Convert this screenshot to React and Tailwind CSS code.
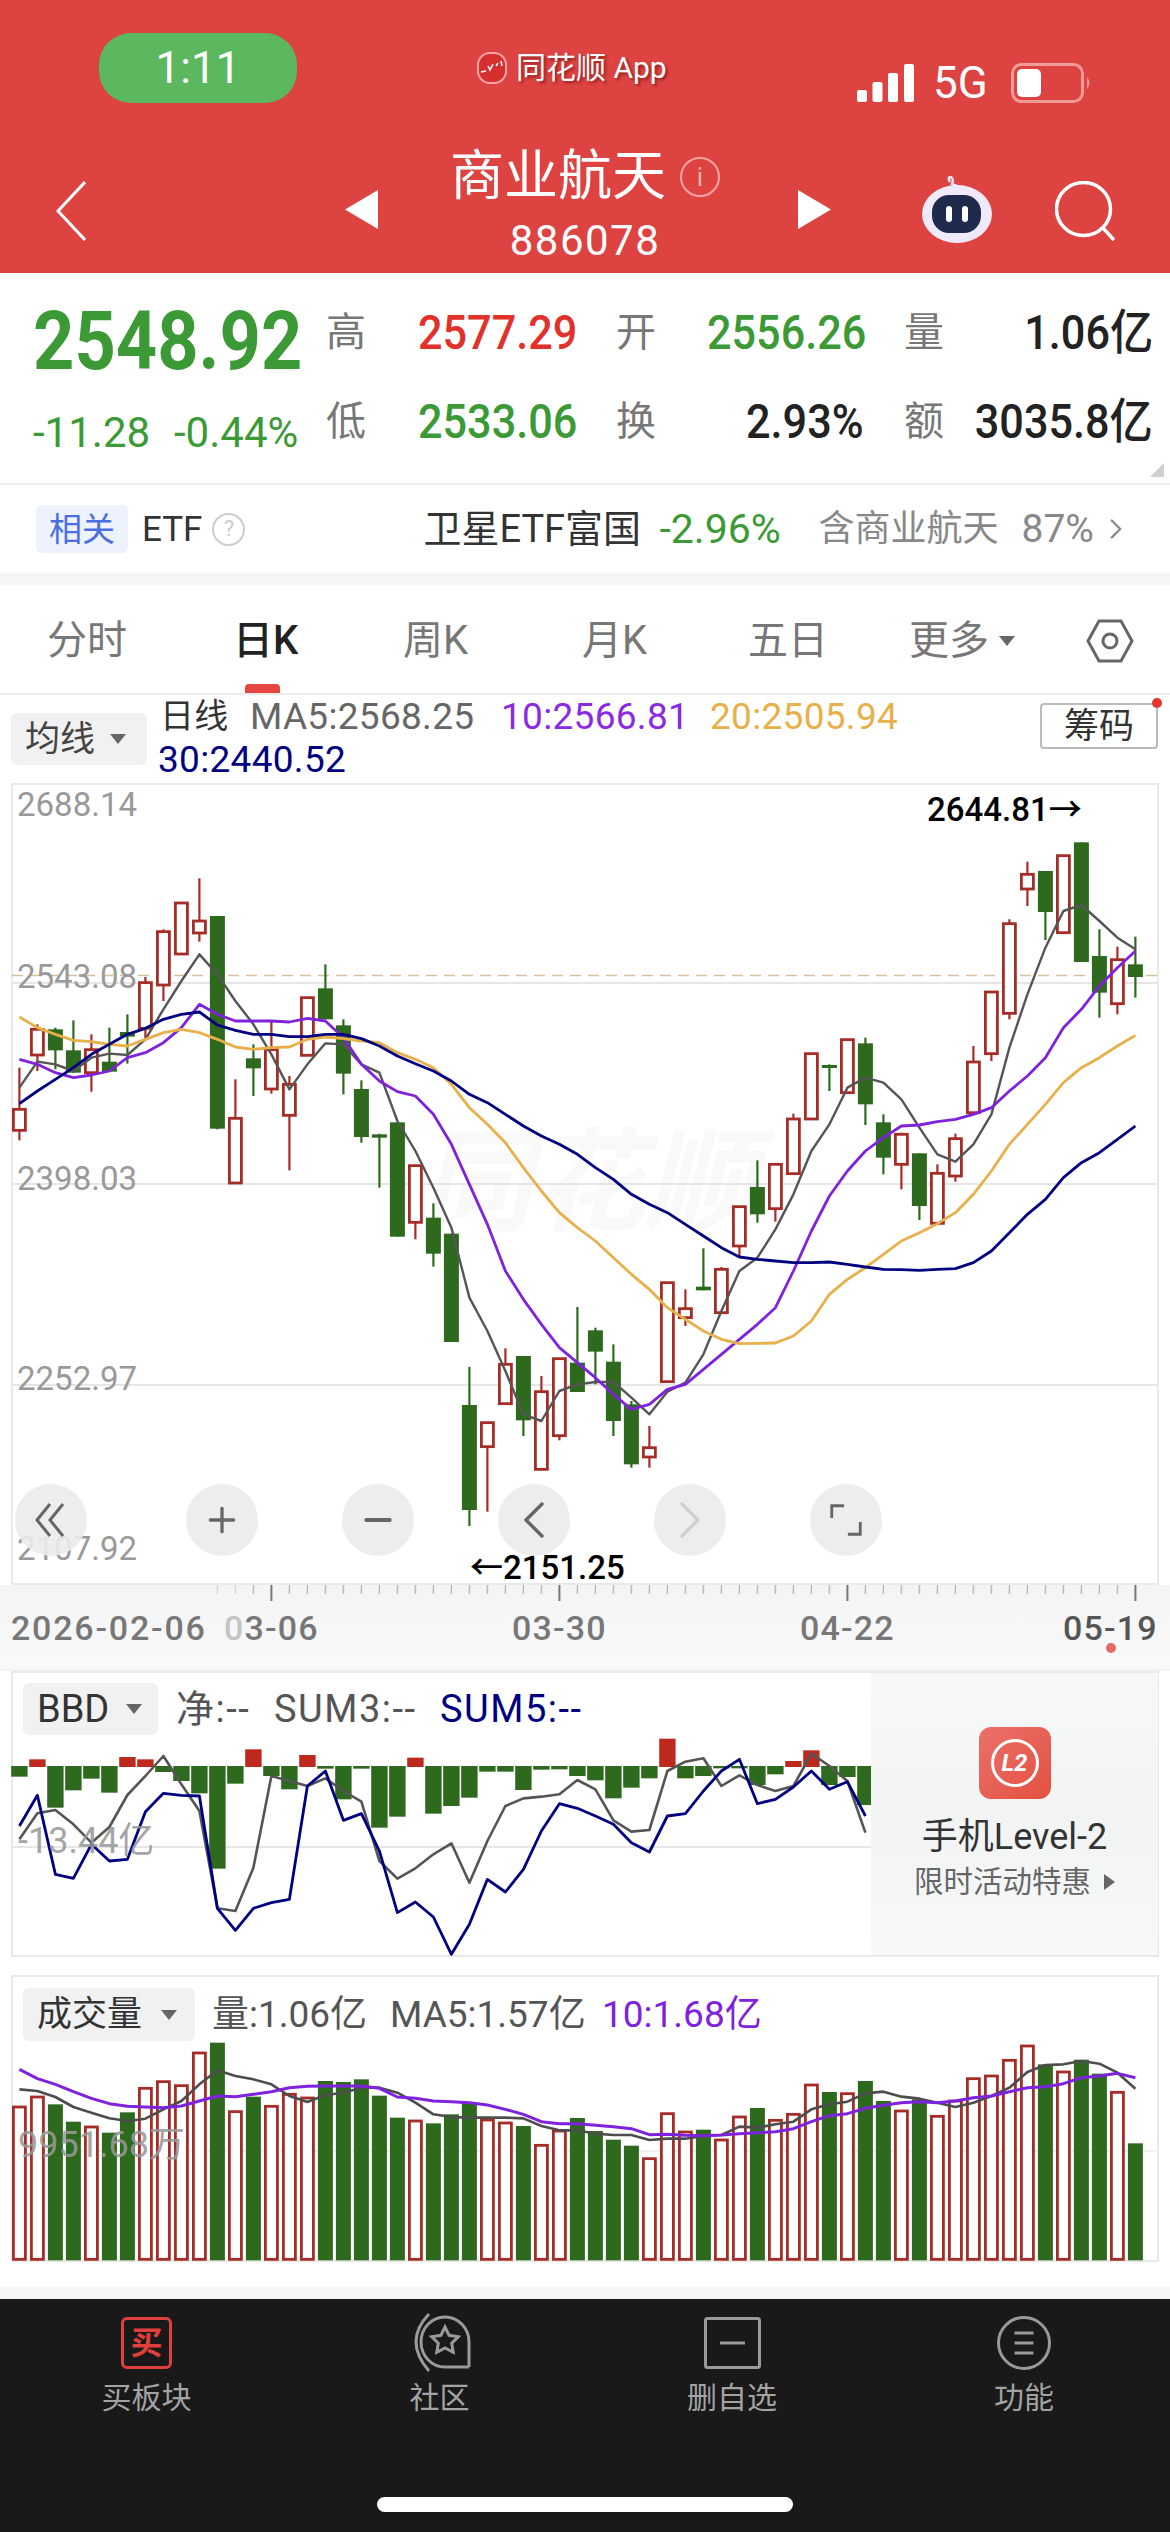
import { ChevronLeft, ChevronRight, Minus, Plus } from "lucide-react";

// candle rows: type, high, top, bottom, low (y values read off a 3x crop of the chart)
const CANDLES = [
  ["r", 890, 1015, 1078, 1108], ["r", 760, 775, 852, 900], ["g", 770, 775, 838, 895], ["g", 748, 838, 905, 905],
  ["r", 790, 836, 905, 962], ["g", 770, 872, 902, 902], ["g", 730, 783, 797, 878], ["r", 618, 635, 772, 810],
  ["r", 475, 482, 642, 690], ["r", 396, 396, 549, 549], ["r", 322, 450, 486, 512], ["g", 435, 435, 1073, 1075],
  ["r", 925, 1042, 1236, 1236], ["g", 820, 862, 892, 975], ["r", 750, 836, 954, 968], ["r", 915, 940, 1033, 1198],
  ["r", 680, 680, 853, 853], ["g", 580, 652, 745, 745], ["g", 745, 763, 908, 970], ["g", 928, 954, 1098, 1115],
  ["g", 1088, 1090, 1100, 1250], ["g", 1054, 1054, 1397, 1397], ["r", 1184, 1184, 1354, 1405], ["g", 1297, 1340, 1448, 1487],
  ["g", 1388, 1388, 1713, 1713], ["g", 1788, 1902, 2217, 2265], ["r", 1955, 1955, 2027, 2222], ["r", 1732, 1780, 1898, 1898],
  ["g", 1755, 1755, 1948, 1995], ["r", 1815, 1862, 2095, 2095], ["r", 1763, 1763, 1994, 2008], ["g", 1608, 1775, 1863, 1863],
  ["g", 1670, 1678, 1742, 1840], ["g", 1720, 1772, 1950, 1995], ["g", 1890, 1900, 2080, 2090], ["r", 1965, 2030, 2058, 2090],
  ["r", 1535, 1535, 1832, 1832], ["r", 1555, 1613, 1640, 1665], ["g", 1432, 1547, 1558, 1558], ["r", 1488, 1495, 1625, 1625],
  ["r", 1307, 1307, 1425, 1460], ["g", 1168, 1248, 1330, 1355], ["r", 1176, 1180, 1313, 1352], ["r", 1028, 1044, 1208, 1210],
  ["r", 845, 848, 1044, 1044], ["g", 880, 882, 890, 960], ["r", 806, 806, 965, 965], ["g", 800, 817, 1000, 1062],
  ["g", 1030, 1054, 1160, 1210], ["r", 1085, 1090, 1180, 1255], ["g", 1147, 1147, 1305, 1347], ["r", 1180, 1207, 1357, 1357],
  ["r", 1088, 1103, 1215, 1232], ["r", 825, 873, 1025, 1025], ["r", 663, 663, 848, 870], ["r", 445, 458, 727, 745],
  ["r", 272, 310, 354, 405], ["g", 300, 300, 423, 507], ["r", 254, 254, 485, 485], ["g", 214, 214, 573, 573],
  ["g", 475, 555, 665, 740], ["r", 527, 566, 698, 730], ["g", 497, 580, 618, 680],
];

const MA5 = [950, 872, 880, 900, 860, 848, 852, 805, 715, 630, 550, 610, 690, 760, 850, 955, 880, 817, 820, 880, 905, 1050, 1140, 1250, 1370, 1580, 1680, 1800, 1930, 1950, 1860, 1840, 1833, 1833, 1880, 1930, 1862, 1835, 1750, 1620, 1500, 1460, 1375, 1270, 1140, 1060, 950, 920, 935, 985, 1070, 1150, 1172, 1120, 1030, 830, 670, 530, 420, 402, 450, 500, 535];
const MA10 = [865, 880, 905, 920, 912, 900, 860, 845, 815, 770, 700, 730, 750, 750, 750, 753, 742, 750, 800, 880, 930, 962, 975, 1030, 1120, 1240, 1360, 1500, 1585, 1660, 1730, 1775, 1820, 1870, 1915, 1900, 1855, 1840, 1795, 1750, 1705, 1660, 1610, 1500, 1380, 1275, 1200, 1140, 1100, 1065, 1062, 1052, 1045, 1030, 1010, 960, 915, 860, 770, 715, 645, 590, 540];
const MA20 = [738, 770, 790, 808, 812, 820, 825, 805, 785, 775, 785, 805, 828, 835, 830, 828, 805, 798, 803, 810, 815, 845, 865, 890, 940, 1010, 1060, 1115, 1190, 1260, 1325, 1370, 1410, 1460, 1510, 1555, 1610, 1645, 1680, 1705, 1718, 1717, 1716, 1695, 1650, 1570, 1525, 1490, 1450, 1410, 1385, 1358, 1325, 1270, 1200, 1120, 1060, 1000, 935, 890, 860, 825, 793];
const MA30 = [998, 960, 925, 890, 850, 820, 790, 772, 745, 730, 723, 762, 778, 790, 790, 797, 797, 790, 790, 803, 825, 855, 878, 900, 930, 970, 995, 1030, 1065, 1095, 1120, 1150, 1190, 1225, 1270, 1300, 1325, 1360, 1395, 1430, 1458, 1465, 1470, 1475, 1475, 1473, 1480, 1488, 1495, 1496, 1498, 1495, 1493, 1475, 1440, 1385, 1330, 1285, 1220, 1175, 1145, 1105, 1065];

const BBD_BARS = [
  ["g", 347], ["r", 295], ["g", 440], ["g", 388], ["g", 353], ["g", 395], ["r", 288], ["r", 295], ["g", 333], ["g", 360], ["g", 397], ["g", 623],
  ["g", 368], ["r", 265], ["g", 345], ["g", 385], ["r", 282], ["g", 323], ["g", 415], ["g", 323], ["g", 500], ["g", 467], ["r", 290], ["g", 458],
  ["g", 435], ["g", 410], ["g", 332], ["g", 332], ["g", 387], ["g", 326], ["g", 325], ["g", 345], ["g", 358], ["g", 412], ["g", 380], ["g", 352],
  ["r", 233], ["g", 352], ["g", 345], ["g", 322], ["g", 322], ["g", 372], ["g", 340], ["r", 300], ["r", 268], ["g", 372], ["g", 348], ["g", 432],
];
const SUM3 = [535, 457, 447, 490, 545, 498, 402, 345, 285, 370, 450, 742, 750, 620, 345, 360, 375, 352, 390, 422, 600, 653, 622, 580, 547, 665, 540, 435, 412, 407, 400, 357, 385, 478, 512, 507, 330, 302, 292, 375, 343, 372, 390, 375, 278, 315, 360, 515];
const SUM5 = [495, 403, 640, 652, 550, 600, 595, 452, 397, 403, 405, 742, 808, 742, 725, 715, 375, 330, 478, 458, 570, 755, 723, 768, 880, 790, 655, 693, 625, 510, 428, 442, 465, 490, 545, 573, 465, 458, 390, 330, 295, 428, 415, 378, 330, 385, 362, 465];

const VOL_BARS = [
  ["r", 408], ["r", 378], ["g", 400], ["g", 452], ["r", 468], ["g", 485], ["g", 424], ["r", 352], ["r", 332], ["r", 344], ["r", 246], ["g", 215],
  ["r", 422], ["g", 377], ["r", 406], ["r", 370], ["r", 381], ["g", 330], ["g", 333], ["g", 325], ["g", 374], ["g", 440], ["r", 450], ["g", 457],
  ["g", 430], ["g", 395], ["r", 447], ["r", 456], ["g", 465], ["r", 523], ["r", 480], ["g", 441], ["g", 480], ["g", 506], ["g", 524], ["r", 563],
  ["r", 428], ["r", 483], ["g", 476], ["r", 507], ["r", 438], ["g", 411], ["r", 448], ["r", 430], ["r", 342], ["g", 363], ["r", 368], ["g", 330],
  ["g", 390], ["r", 420], ["g", 385], ["r", 436], ["r", 390], ["r", 323], ["r", 315], ["r", 268], ["r", 225], ["g", 280], ["r", 303], ["g", 266],
  ["g", 308], ["r", 364], ["g", 517],
];
const VOL5 = [355, 360, 378, 408, 425, 442, 450, 443, 415, 390, 340, 298, 315, 325, 340, 375, 393, 372, 365, 350, 350, 365, 395, 430, 438, 440, 440, 440, 442, 465, 478, 478, 488, 492, 492, 507, 503, 503, 495, 492, 467, 470, 460, 452, 415, 400, 392, 367, 362, 377, 383, 395, 408, 395, 375, 350, 303, 282, 280, 270, 278, 305, 353];
const VOL10 = [295, 323, 340, 362, 382, 398, 406, 408, 410, 405, 390, 375, 377, 370, 362, 350, 346, 345, 345, 345, 352, 378, 382, 390, 392, 395, 402, 415, 430, 452, 458, 458, 463, 467, 473, 491, 490, 493, 494, 492, 488, 485, 482, 473, 452, 434, 428, 412, 403, 395, 392, 395, 390, 380, 375, 362, 350, 347, 338, 320, 315, 307, 320];

const RED = "#a62d27";
const GREEN = "#2d6a1e";
const GREY_LINE = "#555555";
const PURPLE = "#7f22dd";
const ORANGE = "#e8b04b";
const NAVY = "#000080";

const xAt = (i) => 19.4 + 18 * i;
const linePoints = (values, toY) => values.map((v, i) => `${xAt(i)},${toY(v)}`).join(" ");

function Line({ values, toY, color, width = 2.8 }) {
  return <polyline points={linePoints(values, toY)} fill="none" stroke={color} strokeWidth={width} strokeLinejoin="round" />;
}

function Frame({ h }) {
  return <rect x="12" y="1" width="1146" height={h} fill="none" stroke="#e9e9e9" strokeWidth="2" />;
}

function Caret({ className = "" }) {
  return (
    <svg viewBox="0 0 18 12" className={className}>
      <path d="M1 1 H17 L9 11 Z" fill="#666" />
    </svg>
  );
}

function KChart() {
  const toY = (v) => v / 3 - 12;
  return (
    <div className="relative h-[802px]">
      <div className="absolute left-[420px] top-[345px] text-[112px] leading-none font-bold italic whitespace-nowrap text-[#f9f9f9]">同花顺</div>
      <svg className="relative block h-full w-full" viewBox="0 0 1170 802">
        <Frame h={800} />
        {[200, 401, 602].map((y) => (
          <line key={y} x1="12" x2="1158" y1={y} y2={y} stroke="#e6e6e6" strokeWidth="2" />
        ))}
        <line x1="12" x2="1158" y1="192.5" y2="192.5" stroke="#d9bf9b" strokeWidth="1.6" strokeDasharray="11 7" />
        {CANDLES.map(([type, high, top, bottom, low], i) => {
          const x = xAt(i);
          const color = type === "r" ? RED : GREEN;
          return (
            <g key={i}>
              <line x1={x} x2={x} y1={toY(high)} y2={toY(low)} stroke={color} strokeWidth="2.2" />
              {type === "r" ? (
                <rect x={x - 6} y={toY(top)} width="12" height={toY(bottom) - toY(top)} fill="#fff" stroke={color} strokeWidth="2.8" />
              ) : (
                <rect x={x - 7.5} y={toY(top)} width="15" height={Math.max(toY(bottom) - toY(top), 3)} fill={color} />
              )}
            </g>
          );
        })}
        <Line values={MA5} toY={toY} color={GREY_LINE} width={2.4} />
        <Line values={MA10} toY={toY} color={PURPLE} />
        <Line values={MA20} toY={toY} color={ORANGE} />
        <Line values={MA30} toY={toY} color={NAVY} />
      </svg>

      <span className="absolute left-[17px] top-[6px] text-[33px] leading-[32px] text-[#999]">2688.14</span>
      <span className="absolute left-[17px] top-[178px] text-[33px] leading-[32px] text-[#999]">2543.08</span>
      <span className="absolute left-[17px] top-[380px] text-[33px] leading-[32px] text-[#999]">2398.03</span>
      <span className="absolute left-[17px] top-[580px] text-[33px] leading-[32px] text-[#999]">2252.97</span>
      <span className="absolute left-[17px] top-[750px] text-[33px] leading-[32px] text-[#999]">2107.92</span>
      <span className="absolute left-[927px] top-[11px] text-[33px] leading-[32px] font-medium whitespace-nowrap text-black">2644.81→</span>
      <span className="absolute left-[470px] top-[769px] text-[33px] leading-[32px] font-medium whitespace-nowrap text-black">←2151.25</span>

      {/* floating zoom / pan buttons */}
      <div className="absolute left-[15px] top-[701px] flex gap-[84px]">
        <RoundBtn>
          <svg viewBox="0 0 40 40" className="h-[40px] w-[40px]" fill="none" stroke="#666" strokeWidth="3">
            <path d="M19 4 L6 20 L19 36 M32 4 L19 20 L32 36" />
          </svg>
        </RoundBtn>
        <div className="ml-[15px]">
          <RoundBtn><Plus size={40} strokeWidth={2} color="#666" /></RoundBtn>
        </div>
        <RoundBtn><Minus size={40} strokeWidth={2.4} color="#666" /></RoundBtn>
        <RoundBtn><ChevronLeft size={64} strokeWidth={1.3} color="#666" /></RoundBtn>
        <RoundBtn><ChevronRight size={64} strokeWidth={1.3} color="#cfcfcf" /></RoundBtn>
        <RoundBtn>
          <svg viewBox="0 0 40 40" className="h-[38px] w-[38px]" fill="none" stroke="#666" strokeWidth="3">
            <path d="M18 5 H5 V18 M35 22 V35 H22" />
          </svg>
        </RoundBtn>
      </div>
    </div>
  );
}

function RoundBtn({ children }) {
  return <div className="flex h-[72px] w-[72px] items-center justify-center rounded-full bg-[#ebebeb]/90">{children}</div>;
}

function TimeAxis() {
  const ticks = Array.from({ length: 52 }, (_, n) => n + 11);
  return (
    <div className="relative h-[84px] bg-gradient-to-b from-[#f4f4f4] to-[#f9f9f9]">
      <svg className="block h-[20px] w-full" viewBox="0 0 1170 20">
        {ticks.map((i) => {
          const major = (i - 14) % 16 === 0;
          return (
            <line
              key={i}
              x1={xAt(i)}
              x2={xAt(i)}
              y1="0"
              y2={major ? 16 : 9}
              stroke={major ? "#777" : "#bbb"}
              strokeWidth={major ? 2 : 1.5}
              opacity={i < 13 ? 0.5 : 1}
            />
          );
        })}
      </svg>
      <span className="absolute left-[11px] top-[26px] text-[34px] leading-[34px] font-medium tracking-[1.8px] text-[#777]">2026-02-06</span>
      <span className="absolute left-[224px] top-[26px] text-[34px] leading-[34px] font-medium tracking-[1.2px] text-[#777]"><span className="text-[#c4c4c4]">0</span>3-06</span>
      <span className="absolute left-[512px] top-[26px] text-[34px] leading-[34px] font-medium tracking-[1.2px] text-[#777]">03-30</span>
      <span className="absolute left-[800px] top-[26px] text-[34px] leading-[34px] font-medium tracking-[1.2px] text-[#777]">04-22</span>
      <span className="absolute left-[1063px] top-[26px] text-[34px] leading-[34px] font-medium tracking-[1.2px] text-[#555]">05-19</span>
      <span className="absolute left-[1106px] top-[58px] h-[10px] w-[10px] rounded-full bg-[#e46a66]" />
    </div>
  );
}

function BbdPanel() {
  const toY = (v) => v / 3 - 10;
  return (
    <div className="relative h-[286px]">
      <svg className="block h-full w-full" viewBox="0 0 1170 286">
        <Frame h={284} />
        <line x1="12" x2="1158" y1="176" y2="176" stroke="#e6e6e6" strokeWidth="2" />
        {BBD_BARS.map(([type, v], i) => {
          const base = toY(315);
          const y = toY(v);
          return type === "r" ? (
            <rect key={i} x={xAt(i) - 8.2} y={y} width="16.4" height={base - y + 1} fill="#bf281c" />
          ) : (
            <rect key={i} x={xAt(i) - 8.2} y={base} width="16.4" height={y - base} fill={GREEN} />
          );
        })}
        <Line values={SUM3} toY={toY} color={GREY_LINE} width={2.6} />
        <Line values={SUM5} toY={toY} color={NAVY} width={2.8} />
      </svg>

      <span className="absolute left-[18px] top-[152px] text-[36px] leading-[36px] whitespace-nowrap text-[#999]/90">-13.44亿</span>

      <div className="absolute left-[23px] top-[12px] flex items-center">
        <div className="flex h-[52px] w-[135px] items-center gap-[16px] rounded-[6px] bg-[#f1f1f1] pl-[14px] text-[38px] leading-none text-[#333]">
          BBD <Caret className="h-[12px] w-[18px]" />
        </div>
        <div className="ml-[18px] flex text-[38px] leading-none tracking-[1.5px] whitespace-nowrap text-[#555]">
          <span className="w-[98px]">净:--</span>
          <span className="w-[166px]">SUM3:--</span>
          <span className="text-[#000080]">SUM5:--</span>
        </div>
      </div>

      {/* level-2 promo sits on top of the right part of the chart */}
      <div className="absolute bottom-[2px] left-[871px] top-[2px] flex w-[287px] flex-col items-center bg-gradient-to-b from-[#f7f8f8] via-[#f2f3f3] to-[#f7f8f8] pt-[54px]">
        <div className="flex h-[72px] w-[72px] items-center justify-center rounded-[12px] bg-gradient-to-br from-[#e9706a] to-[#e4503f]">
          <div className="flex h-[48px] w-[48px] items-center justify-center rounded-full border-[3px] border-white text-[24px] leading-none font-bold italic text-white">
            L2
          </div>
        </div>
        <div className="mt-[20px] text-[36px] leading-[36px] whitespace-nowrap text-[#333]">手机Level-2</div>
        <div className="mt-[11px] flex items-center gap-[13px] text-[29.5px] leading-[32px] whitespace-nowrap text-[#666]">
          限时活动特惠
          <svg viewBox="0 0 11 16" className="h-[16px] w-[11px]">
            <path d="M0 0 L11 8 L0 16 Z" fill="#666" />
          </svg>
        </div>
      </div>
    </div>
  );
}

function VolumePanel() {
  const toY = (v) => v / 3 - 4;
  const base = toY(868);
  return (
    <div className="relative h-[312px]">
      <svg className="block h-full w-full" viewBox="0 0 1170 312">
        <rect x="12" y="1" width="1146" height="285" fill="none" stroke="#e9e9e9" strokeWidth="2" />
        <line x1="12" x2="1158" y1="176" y2="176" stroke="#eee" strokeWidth="1.5" />
        {VOL_BARS.map(([type, v], i) => {
          const y = toY(v);
          return type === "r" ? (
            <rect key={i} x={xAt(i) - 6} y={y} width="12" height={base - y - 1} fill="#fff" stroke={RED} strokeWidth="2.8" />
          ) : (
            <rect key={i} x={xAt(i) - 7.5} y={y} width="15" height={base - y} fill={GREEN} />
          );
        })}
        <Line values={VOL5} toY={toY} color="#4d4d4d" width={2.6} />
        <Line values={VOL10} toY={toY} color={PURPLE} width={3} />
      </svg>

      <span className="absolute left-[18px] top-[152px] text-[36px] leading-[36px] whitespace-nowrap text-[#999]/90">9951.68万</span>

      <div className="absolute left-[23px] top-[13px] flex items-center">
        <div className="flex h-[53px] w-[172px] items-center gap-[18px] rounded-[6px] bg-[#f1f1f1] pl-[14px] text-[35px] leading-none text-[#333]">
          成交量 <Caret className="h-[12px] w-[18px]" />
        </div>
        <div className="ml-[17px] flex text-[37px] leading-none whitespace-nowrap text-[#555]">
          <span className="w-[178px]">量:1.06亿</span>
          <span className="w-[212px]">MA5:1.57亿</span>
          <span className="text-[#7f22dd]">10:1.68亿</span>
        </div>
      </div>
    </div>
  );
}

function TabItem({ icon, label }) {
  return (
    <div className="flex flex-col items-center">
      <div className="flex h-[60px] items-center justify-center">{icon}</div>
      <div className="mt-[10px] text-[30px] leading-[30px] text-[#a3a3a3]">{label}</div>
    </div>
  );
}

function BuyIcon() {
  return (
    <div className="flex h-[52px] w-[51px] items-center justify-center rounded-[6px] border-[3px] border-[#e0403d] text-[32px] leading-none font-bold text-[#e0403d]">
      买
    </div>
  );
}

function CommunityIcon() {
  return (
    <svg viewBox="0 0 62 60" className="h-[60px] w-[62px]" fill="none" stroke="#9a9a9a" strokeWidth="3">
      <path d="M20 1 Q-6 28 20 58" />
      <path d="M60 54 V29 A24 25 0 1 0 36 54 H60" />
      <polygon points="36,14 40.1,22.3 49.3,23.7 42.7,30.2 44.2,39.3 36,35 27.8,39.3 29.3,30.2 22.7,23.7 31.9,22.3" />
    </svg>
  );
}

function WatchlistIcon() {
  return (
    <svg viewBox="0 0 57 52" className="h-[52px] w-[57px]" fill="none" stroke="#9a9a9a" strokeWidth="3">
      <rect x="1.5" y="1.5" width="54" height="49" rx="2" />
      <line x1="16" x2="41" y1="26" y2="26" />
    </svg>
  );
}

function MenuIcon() {
  return (
    <svg viewBox="0 0 54 54" className="h-[54px] w-[54px]" fill="none" stroke="#9a9a9a" strokeWidth="3">
      <circle cx="27" cy="27" r="25.5" />
      <path d="M17.5 17 H36.5 M17.5 27 H36.5 M17.5 37 H36.5" />
    </svg>
  );
}

function StatusBar() {
  return (
    <div className="flex h-[130px] items-start pl-[99px] pt-[33px] text-white">
      <div className="flex h-[70px] w-[198px] items-center justify-center rounded-[32px] bg-[#5cb85f] text-[44px] leading-none">1:11</div>
      <div className="ml-[180px] flex h-[70px] w-[380px] items-center gap-[9px]">
        <svg viewBox="0 0 30 32" className="h-[32px] w-[30px]">
          <rect x="1" y="1" width="28" height="30" rx="12" fill="#d5302f" stroke="#f1a6a4" strokeWidth="2" />
          <path d="M4 20 L9 19 M11 14 L13 18 L16 12 M19 14 L21 11 M24 9 L25 14" stroke="#fff" strokeWidth="1.5" fill="none" />
        </svg>
        <span className="text-[30px] leading-none whitespace-nowrap [text-shadow:2px_2px_3px_rgba(90,0,0,0.55)]">同花顺 App</span>
      </div>
      <div className="mt-[28px] flex items-center">
        <svg viewBox="0 0 57 38" className="h-[38px] w-[57px]" fill="#fff">
          <rect x="0" y="26" width="10" height="12" rx="2" />
          <rect x="15.5" y="18" width="10" height="20" rx="2" />
          <rect x="31" y="9" width="10" height="29" rx="2" />
          <rect x="47" y="0" width="10" height="38" rx="2" />
        </svg>
        <span className="ml-[19px] text-[44px] leading-none">5G</span>
        <svg viewBox="0 0 82 40" className="ml-[23px] h-[40px] w-[82px]">
          <rect x="1.5" y="1.5" width="70" height="37" rx="9" fill="none" stroke="#f29a98" strokeWidth="3" />
          <rect x="6" y="6" width="24" height="28" rx="5" fill="#fff" />
          <path d="M76 14 Q81 20 76 26 Z" fill="#f29a98" />
        </svg>
      </div>
    </div>
  );
}

function TitleBar() {
  return (
    <div className="flex h-[143px] items-start pl-[56px] text-white">
      <svg viewBox="0 0 30 60" className="mt-[51px] h-[60px] w-[30px]" fill="none" stroke="#fff" strokeWidth="3">
        <path d="M29 1 L2 30 L29 59" />
      </svg>
      <svg viewBox="0 0 33 39" className="ml-[259px] mt-[60px] h-[39px] w-[33px]">
        <path d="M33 0 V39 L0 19.5 Z" fill="#fff" />
      </svg>
      <div className="flex w-[420px] flex-col items-center pt-[20px]">
        <div className="flex items-center gap-[14px] pr-[6px]">
          <span className="text-[54px] leading-[54px]">商业航天</span>
          <span className="flex h-[40px] w-[40px] items-center justify-center rounded-full border-2 border-[#f5a5a3] text-[26px] leading-none text-[#f7b5b3]">i</span>
        </div>
        <div className="mt-[17px] pr-[6px] text-[42px] leading-[40px] tracking-[1.5px]">886078</div>
      </div>
      <svg viewBox="0 0 33 39" className="mt-[60px] h-[39px] w-[33px]">
        <path d="M0 0 V39 L33 19.5 Z" fill="#fff" />
      </svg>
      <svg viewBox="0 0 72 68" className="ml-[90px] mt-[46px] h-[68px] w-[72px]">
        <path d="M29 6 Q26 1 30 1 Q33 3 31 8 Q34 10 36 9" stroke="#e9e4f7" strokeWidth="2.5" fill="none" />
        <ellipse cx="36" cy="38" rx="35" ry="29" fill="#eeeaf9" />
        <rect x="11" y="19" width="49" height="38" rx="17" fill="#1f2a4d" />
        <rect x="25" y="30" width="6" height="16" rx="3" fill="#fff" />
        <rect x="41" y="30" width="6" height="16" rx="3" fill="#fff" />
      </svg>
      <svg viewBox="0 0 60 60" className="ml-[62px] mt-[51px] h-[60px] w-[60px]" fill="none" stroke="#fff" strokeWidth="3.5">
        <ellipse cx="28.5" cy="28" rx="27" ry="26.5" />
        <path d="M48 47 L59 59" />
      </svg>
    </div>
  );
}

function Quote() {
  const num = "inline-block whitespace-nowrap";
  return (
    <div className="relative flex h-[212px] border-b-2 border-[#ededed] bg-white">
      <div className="w-[326px] pl-[33px]">
        <div className={`${num} mt-[27px] origin-left scale-x-[0.88] text-[82px] leading-[82px] font-bold text-[#3c9a36]`}>2548.92</div>
        <div className="mt-[30px] flex gap-[24px] text-[42px] leading-[42px] text-[#3c9a36]">
          <span className={`${num} w-[117px]`}>-11.28</span>
          <span className={`${num} w-[128px]`}>-0.44%</span>
        </div>
      </div>
      <div className="grid flex-1 grid-cols-[92px_198px_91px_197px_40px_1fr] grid-rows-[89px_89px] items-center pt-[15px] pr-[17px] text-[40px] text-[#777]">
        <span>高</span>
        <span className={`${num} origin-left scale-x-[0.9] text-[48px] leading-none font-medium text-[#e1312b]`}>2577.29</span>
        <span>开</span>
        <span className={`${num} origin-left scale-x-[0.9] text-[48px] leading-none font-medium text-[#3c9a36]`}>2556.26</span>
        <span>量</span>
        <span className={`${num} origin-right scale-x-[0.9] justify-self-end text-[48px] leading-none font-medium text-[#222]`}>1.06亿</span>
        <span>低</span>
        <span className={`${num} origin-left scale-x-[0.9] text-[48px] leading-none font-medium text-[#3c9a36]`}>2533.06</span>
        <span>换</span>
        <span className={`${num} mr-[40px] origin-right scale-x-[0.9] justify-self-end text-[48px] leading-none font-medium text-[#222]`}>2.93%</span>
        <span>额</span>
        <span className={`${num} origin-right scale-x-[0.9] justify-self-end text-[48px] leading-none font-medium text-[#222]`}>3035.8亿</span>
      </div>
      <svg viewBox="0 0 14 14" className="absolute bottom-[6px] right-[6px] h-[14px] w-[14px]">
        <path d="M14 0 V14 H0 Z" fill="#cfcfcf" />
      </svg>
    </div>
  );
}

function RelatedRow() {
  return (
    <div className="flex h-[88px] items-center bg-white pl-[36px] whitespace-nowrap">
      <div className="flex h-[48px] w-[92px] items-center justify-center rounded-[6px] bg-[#eef2fc] text-[33px] leading-none text-[#4b6fe0]">相关</div>
      <span className="ml-[14px] text-[35px] leading-none text-[#333]">ETF</span>
      <span className="ml-[10px] flex h-[33px] w-[33px] items-center justify-center rounded-full border-2 border-[#ccc] text-[22px] leading-none text-[#ccc]">?</span>
      <span className="ml-[178px] w-[236px] text-[38px] leading-none text-[#333]">卫星ETF富国</span>
      <span className="w-[159px] text-[41px] leading-none text-[#3c9a36]">-2.96%</span>
      <span className="w-[203px] text-[36px] leading-none text-[#888]">含商业航天</span>
      <span className="w-[84px] text-[39px] leading-none text-[#888]">87%</span>
      <ChevronRight size={34} strokeWidth={1.6} color="#888" className="-ml-[6px]" />
    </div>
  );
}

function PeriodTabs() {
  return (
    <div className="relative grid h-[110px] grid-cols-[186px_170px_179px_166px_161px_177px_auto] items-center border-b-2 border-[#ececec] bg-white pl-[47px] pt-[4px] text-[40px] leading-none text-[#777]">
      <span>分时</span>
      <span className="font-medium text-[#222]">日K</span>
      <span>周K</span>
      <span>月K</span>
      <span>五日</span>
      <span className="flex items-center gap-[9px]">
        更多
        <Caret className="h-[12px] w-[18px]" />
      </span>
      <svg viewBox="0 0 48 44" className="h-[44px] w-[48px]" fill="none" stroke="#666" strokeWidth="3">
        <path d="M13 2 H35 L46 22 L35 42 H13 L2 22 Z" />
        <circle cx="24" cy="22" r="7" />
      </svg>
      <span className="absolute bottom-[0px] left-[245px] h-[9px] w-[35px] rounded-t-[4px] bg-[#e5463f]" />
    </div>
  );
}

function Legend() {
  return (
    <div className="relative flex h-[88px] pl-[11px]">
      <div className="mt-[18px] flex h-[52px] w-[136px] items-center gap-[14px] rounded-[6px] bg-[#f1f1f1] pl-[14px] text-[35px] leading-none text-[#444]">
        均线 <Caret className="h-[12px] w-[18px]" />
      </div>
      <div className="ml-[11px] whitespace-nowrap text-[37px] leading-[43px] tracking-[0.3px]">
        <div className="flex">
          <span className="w-[92px] pl-[2px] text-[34px] text-[#333]">日线</span>
          <span className="w-[251px] text-[#666]">MA5:2568.25</span>
          <span className="w-[209px] text-[#8a2be2]">10:2566.81</span>
          <span className="text-[#e8b04b]">20:2505.94</span>
        </div>
        <div className="text-[#000080]">30:2440.52</div>
      </div>
      <div className="absolute right-[12px] top-[8px] flex h-[46px] w-[118px] items-center justify-center rounded-[4px] border-2 border-[#bbb] text-[35px] leading-none text-[#333]">
        筹码
        <span className="absolute -right-[6px] -top-[7px] h-[10px] w-[10px] rounded-full bg-[#e5352f]" />
      </div>
    </div>
  );
}

export default function App() {
  return (
    <div className="mx-auto h-[2532px] w-[1170px] overflow-hidden bg-white font-['Roboto','Noto_Sans_CJK_SC',sans-serif]">
      <div className="h-[273px] bg-[#dd4341]">
        <StatusBar />
        <TitleBar />
      </div>
      <Quote />
      <RelatedRow />
      <div className="h-[12px] bg-[#f5f5f5]" />
      <PeriodTabs />
      <Legend />
      <KChart />
      <TimeAxis />
      <div className="h-[2px] bg-[#f3f3f3]" />
      <BbdPanel />
      <div className="h-[18px]" />
      <VolumePanel />
      <div className="h-[12px] bg-[#f5f5f5]" />
      <div className="relative h-[234px] bg-[#191919]">
        <div className="grid grid-cols-[293px_293px_292px_292px] pt-[14px]">
          <TabItem icon={<BuyIcon />} label="买板块" />
          <TabItem icon={<CommunityIcon />} label="社区" />
          <TabItem icon={<WatchlistIcon />} label="删自选" />
          <TabItem icon={<MenuIcon />} label="功能" />
        </div>
        <div className="mx-auto mt-[84px] h-[15px] w-[416px] rounded-full bg-white" />
      </div>
    </div>
  );
}
